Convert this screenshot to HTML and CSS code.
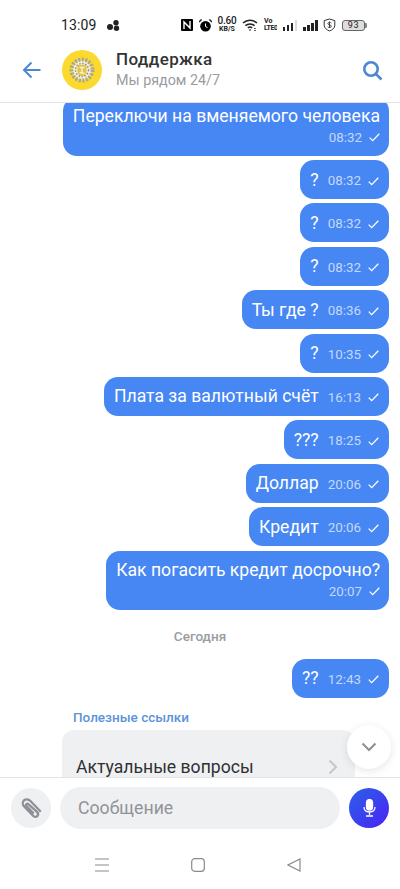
FILE: index.html
```html
<!DOCTYPE html>
<html lang="ru">
<head>
    <meta charset="UTF-8">
    <meta name="viewport" content="width=device-width, initial-scale=1.0">
    <title>Поддержка</title>
    <link rel="stylesheet" href="styles.css">
</head>
<body>
<div class="app">
    <div class="statusbar">
        <span class="clock">13:09</span>
        <svg class="st-dots" width="13" height="11" viewBox="0 0 13 11"><circle cx="9" cy="2.800" r="2.700"/><circle cx="3" cy="7" r="3"/><circle cx="9.500" cy="8.300" r="2.700"/></svg>
        <div class="st-right">
            <svg width="12" height="12" viewBox="0 0 12 12"><path d="M1 0h10a1 1 0 0 1 1 1v10a1 1 0 0 1-1 1H1a1 1 0 0 1-1-1V1a1 1 0 0 1 1-1z"/><path d="M3 10V3l6 6V2" fill="none" stroke="#fff" stroke-width="1.400"/></svg>
            <svg width="13" height="13" viewBox="0 0 13 13"><circle cx="6.500" cy="7.200" r="5.300"/><path d="M0 3l2.600-2.600M13 3l-2.600-2.600" stroke="#222" stroke-width="1.400"/><path d="M6.500 4.500v3l2 1" fill="none" stroke="#fff" stroke-width="1"/></svg>
            <div class="st-speed"><b>0.60</b><i>KB/S</i></div>
            <svg width="16" height="12" viewBox="0 0 16 12" fill="none" stroke="#222" stroke-width="1.500"><path d="M1 4c4-3.600 10-3.600 14 0M3.400 6.600c2.600-2.300 6.600-2.300 9.200 0M5.800 9c1.200-1 3.200-1 4.400 0"/><path d="M8 10.300v1.500M13 9v1M13 11v1" stroke-width="1.400"/></svg>
            <div class="st-volte"><b>Vo</b><i>LTE0</i></div>
            <div class="signal"><span class="s1"></span><span class="s2"></span><span class="s3"></span><span class="s4 off"></span></div>
            <div class="signal"><span class="s1"></span><span class="s2"></span><span class="s3"></span><span class="s4"></span></div>
            <svg width="13" height="14" viewBox="0 0 13 14" fill="none" stroke="#333" stroke-width="1"><path d="M6.500 1l5.300 1.600v4.600c0 2.800-2.400 4.600-5.300 5.800C3.600 11.800 1.200 10 1.200 7.200V2.600z"/><path d="M8.300 5c-.5-.8-3.400-.9-3.400.6 0 1.700 3.500.9 3.500 2.700 0 1.500-3 1.400-3.700.5M6.500 3.500v6.500" stroke-width=".9"/></svg>
            <div class="battery"><span>93</span></div>
        </div>
    </div>

    <header class="topbar">
        <svg class="back" width="20" height="18" viewBox="0 0 20 18" fill="none" stroke="#4a87d6" stroke-width="2"><path d="M18.500 9H2M9.500 1.500L2 9l7.500 7.500"/></svg>
        <div class="avatar">
            <svg width="28" height="28" viewBox="0 0 28 28">
                <circle cx="14" cy="14" r="9.500" fill="#f4f0dc"/>
                <circle cx="14" cy="14" r="10.500" fill="none" stroke="#a8a594" stroke-width="4" stroke-dasharray="2 1.500"/>
                <circle cx="14" cy="14" r="6.500" fill="none" stroke="#8d8b7c" stroke-width="1.500" stroke-dasharray="1.500 1.500"/>
                <path d="M9.500 9h9v6.500c0 2.500-2.200 4-4.500 5-2.300-1-4.500-2.500-4.500-5z" fill="#e3c33f"/>
                <path d="M11.500 11.500h5M14 11.500v5.500M11.500 16.500l5 1" fill="none" stroke="#f8f3d6" stroke-width="1.300"/>
            </svg>
        </div>
        <div class="chat-title">
            <div class="chat-name">Поддержка</div>
            <div class="chat-sub">Мы рядом 24/7</div>
        </div>
        <svg class="search" width="21" height="21" viewBox="0 0 21 21" fill="none" stroke="#4a87d6" stroke-width="2.600"><circle cx="9" cy="9" r="6.700"/><path d="M13.800 13.800L19.500 19.500"/></svg>
    </header>

    <main class="messages">
        <div class="bubble wrap first">
            <div>Переключи на вменяемого человека</div>
            <div class="meta"><span class="time">08:32</span><svg class="tick" width="11" height="9" viewBox="0 0 11 9"><path d="M.7 4.600l3 3L10.300 .8"/></svg></div>
        </div>
        <div class="bubble"><span>?</span><span class="meta"><span class="time">08:32</span><svg class="tick" width="11" height="9" viewBox="0 0 11 9"><path d="M.7 4.600l3 3L10.300 .8"/></svg></span></div>
        <div class="bubble"><span>?</span><span class="meta"><span class="time">08:32</span><svg class="tick" width="11" height="9" viewBox="0 0 11 9"><path d="M.7 4.600l3 3L10.300 .8"/></svg></span></div>
        <div class="bubble"><span>?</span><span class="meta"><span class="time">08:32</span><svg class="tick" width="11" height="9" viewBox="0 0 11 9"><path d="M.7 4.600l3 3L10.300 .8"/></svg></span></div>
        <div class="bubble"><span>Ты где ?</span><span class="meta"><span class="time">08:36</span><svg class="tick" width="11" height="9" viewBox="0 0 11 9"><path d="M.7 4.600l3 3L10.300 .8"/></svg></span></div>
        <div class="bubble"><span>?</span><span class="meta"><span class="time">10:35</span><svg class="tick" width="11" height="9" viewBox="0 0 11 9"><path d="M.7 4.600l3 3L10.300 .8"/></svg></span></div>
        <div class="bubble"><span>Плата за валютный счёт</span><span class="meta"><span class="time">16:13</span><svg class="tick" width="11" height="9" viewBox="0 0 11 9"><path d="M.7 4.600l3 3L10.300 .8"/></svg></span></div>
        <div class="bubble"><span>???</span><span class="meta"><span class="time">18:25</span><svg class="tick" width="11" height="9" viewBox="0 0 11 9"><path d="M.7 4.600l3 3L10.300 .8"/></svg></span></div>
        <div class="bubble"><span>Доллар</span><span class="meta"><span class="time">20:06</span><svg class="tick" width="11" height="9" viewBox="0 0 11 9"><path d="M.7 4.600l3 3L10.300 .8"/></svg></span></div>
        <div class="bubble"><span>Кредит</span><span class="meta"><span class="time">20:06</span><svg class="tick" width="11" height="9" viewBox="0 0 11 9"><path d="M.7 4.600l3 3L10.300 .8"/></svg></span></div>
        <div class="bubble wrap">
            <div>Как погасить кредит досрочно?</div>
            <div class="meta"><span class="time">20:07</span><svg class="tick" width="11" height="9" viewBox="0 0 11 9"><path d="M.7 4.600l3 3L10.300 .8"/></svg></div>
        </div>
        <div class="day">Сегодня</div>
        <div class="bubble"><span>??</span><span class="meta"><span class="time">12:43</span><svg class="tick" width="11" height="9" viewBox="0 0 11 9"><path d="M.7 4.600l3 3L10.300 .8"/></svg></span></div>
        <div class="links-title">Полезные ссылки</div>
        <div class="links-card">
            <span>Актуальные вопросы</span>
            <svg width="10" height="16" viewBox="0 0 10 16" fill="none" stroke="#c4c6ca" stroke-width="2"><path d="M1.500 1.500L8 8l-6.500 6.500"/></svg>
        </div>
        <button class="scroll-down"><svg width="16" height="10" viewBox="0 0 16 10" fill="none" stroke="#8f9298" stroke-width="2.200"><path d="M1.500 1.500L8 8l6.500-6.500"/></svg></button>
    </main>

    <footer class="composer">
        <div class="attach">
            <svg width="26" height="26" viewBox="0 0 24 24" fill="none" stroke="#8e9096" stroke-width="2.100"><path d="M21 15.500L11.500 5.500c-1.800-1.900-4.500-2-6-.5s-1.400 4 .4 5.900l8 8.300c1.200 1.200 2.900 1.300 3.900.3s.9-2.700-.3-3.900L9.800 8.600c-.6-.6-1.500-.7-2-.2s-.4 1.400.2 2l6.500 6.800"/></svg>
        </div>
        <div class="input">Сообщение</div>
        <div class="mic">
            <svg width="13" height="18" viewBox="0 0 13 18" fill="none" stroke="#fff" stroke-width="1.300"><rect x="3.500" y=".5" width="6" height="10.500" rx="3" fill="#fff"/><path d="M1 8c0 3.200 2.200 5 5.500 5s5.500-1.800 5.500-5M6.500 13v3M3 17h7"/></svg>
        </div>
    </footer>

    <nav class="navbar">
        <svg width="14" height="14" viewBox="0 0 14 14" stroke="#8a8a8a" stroke-width="1.200"><path d="M0 1h14M0 7h14M0 13h14"/></svg>
        <svg width="14" height="14" viewBox="0 0 14 14" fill="none" stroke="#8a8a8a" stroke-width="1.200"><rect x=".7" y=".7" width="12.600" height="12.600" rx="3"/></svg>
        <svg width="14" height="14" viewBox="0 0 14 14" fill="none" stroke="#8a8a8a" stroke-width="1.200"><path d="M13 1v12L1 7z"/></svg>
    </nav>
</div>
</body>
</html>
```

FILE: styles.css
```css
* { box-sizing: border-box; }

body {
    margin: 0;
    background-color: #fff;
    font-family: Roboto, "Noto Sans", sans-serif;
    color: #2f3033;
}

.app {
    width: 400px;
    height: 889px;
    display: flex;
    flex-direction: column;
    overflow: hidden;
}

/* status bar */
.statusbar {
    height: 40px;
    flex: none;
    display: flex;
    align-items: center;
    padding: 10px 35px 0 61px;
}
.clock { font-size: 14px; color: #222; width: 46px; letter-spacing: .1px; }
.st-dots { fill: #222; }
.st-right {
    margin-left: auto;
    display: flex;
    align-items: center;
    gap: 5.750px;
    color: #222;
}
.st-speed { display: flex; flex-direction: column; align-items: center; line-height: 8px; }
.st-speed b { font-size: 10px; font-weight: 500; letter-spacing: -.2px; }
.st-speed i { font-size: 7px; font-style: normal; font-weight: 700; }
.st-volte { display: flex; flex-direction: column; line-height: 7px; font-size: 7px; width: 13px; overflow: hidden; }
.st-volte b { font-weight: 700; }
.st-volte i { font-style: normal; font-weight: 700; letter-spacing: -.4px; }
.signal { display: flex; align-items: flex-end; gap: 1.500px; height: 12px; }
.signal span { width: 2.500px; background-color: #222; }
.signal .s1 { height: 4px; }
.signal .s2 { height: 6px; }
.signal .s3 { height: 8px; }
.signal .s4 { height: 11px; }
.signal .off { background-color: #ddd; }
.battery {
    position: relative;
    width: 23px;
    height: 11px;
    border: 1px solid #666;
    border-radius: 3px;
    background-color: #ddd;
    font-size: 9px;
    line-height: 9px;
    text-align: center;
    letter-spacing: .6px;
    color: #222;
}
.battery::after {
    content: "";
    position: absolute;
    right: -3px;
    top: 2px;
    width: 2px;
    height: 5px;
    border-radius: 0 1px 1px 0;
    background-color: #888;
}

/* header */
.topbar {
    height: 63px;
    flex: none;
    display: flex;
    align-items: center;
    padding: 0 17px 2px 22px;
    border-bottom: 1px solid #e2e3e5;
    background-color: #fff;
    position: relative;
    z-index: 1;
}
.avatar {
    width: 40px;
    height: 40px;
    margin-left: 20px;
    border-radius: 50%;
    background-color: #fbd92f;
    display: flex;
    align-items: center;
    justify-content: center;
}
.chat-title { margin-left: 14px; flex: 1; }
.chat-name { font-size: 17px; font-weight: 500; line-height: 21px; color: #333; letter-spacing: .35px; }
.chat-sub { font-size: 14.300px; line-height: 21px; color: #9a9ca1; }

/* messages */
.messages {
    flex: 1;
    min-height: 0;
    position: relative;
    overflow: hidden;
    display: flex;
    flex-direction: column;
    align-items: flex-end;
    gap: 4.400px;
    padding: 0 11px;
    margin-top: -1px;
}
.bubble {
    min-height: 39px;
    flex: none;
    display: flex;
    align-items: center;
    gap: 9px;
    padding: 0 10px 0 10px;
    border-radius: 14px;
    background-color: #4687f4;
    color: #fff;
    font-size: 17.600px;
}
.bubble.wrap {
    display: block;
    padding: 8px 9px 8px 10px;
    line-height: 22px;
}
.bubble.first { margin-top: -5.400px; }
.meta {
    display: flex;
    align-items: center;
    justify-content: flex-end;
    gap: 7px;
    margin-top: 3px;
}
.bubble.wrap .meta { margin-top: 1px; }
.time { font-size: 13.400px; color: #c4d8fb; line-height: 20px; }
.tick { fill: none; stroke: #fff; stroke-width: 1.300; }
.day {
    align-self: center;
    margin: 11.600px 0 9px;
    font-size: 13.500px;
    font-weight: 500;
    line-height: 20px;
    color: #9a9ca1;
}
.links-title {
    align-self: flex-start;
    margin: 4.600px 0 0 62px;
    font-size: 13.500px;
    font-weight: 500;
    line-height: 20px;
    color: #5b93d8;
}
.links-card {
    align-self: flex-start;
    width: 293px;
    height: 60px;
    margin: -1.400px 0 0 51px;
    padding: 26px 14px 0 14px;
    display: flex;
    align-items: flex-start;
    justify-content: space-between;
    border-radius: 12px;
    background-color: #eff0f2;
    font-size: 17.600px;
    line-height: 22px;
    flex: none;
}
.links-card svg { margin-top: 3px; margin-right: 3px; }
.scroll-down {
    position: absolute;
    right: 9px;
    bottom: 8px;
    width: 44px;
    height: 44px;
    border: 0;
    border-radius: 50%;
    background-color: #fff;
    box-shadow: 0 2px 8px rgba(0, 0, 0, .1);
    display: flex;
    align-items: center;
    justify-content: center;
}

/* composer */
.composer {
    flex: none;
    height: 61px;
    display: flex;
    align-items: center;
    padding: 0 11px;
    border-top: 1px solid #e2e3e5;
    background-color: #fff;
    position: relative;
}
.attach {
    width: 40px;
    height: 40px;
    border-radius: 50%;
    background-color: #eff0f2;
    display: flex;
    align-items: center;
    justify-content: center;
}
.input {
    width: 280px;
    height: 42px;
    margin-left: 9px;
    padding-left: 18px;
    border-radius: 21px;
    background-color: #eff0f2;
    color: #919398;
    font-size: 17.700px;
    line-height: 42px;
}
.mic {
    width: 40px;
    height: 40px;
    margin-left: 9px;
    border-radius: 50%;
    background: linear-gradient(135deg, #2a62e8, #4a22f5);
    display: flex;
    align-items: center;
    justify-content: center;
}

/* nav */
.navbar {
    flex: none;
    height: 51px;
    display: flex;
    align-items: center;
    gap: 82px;
    padding: 3px 0 0 95px;
}
```
